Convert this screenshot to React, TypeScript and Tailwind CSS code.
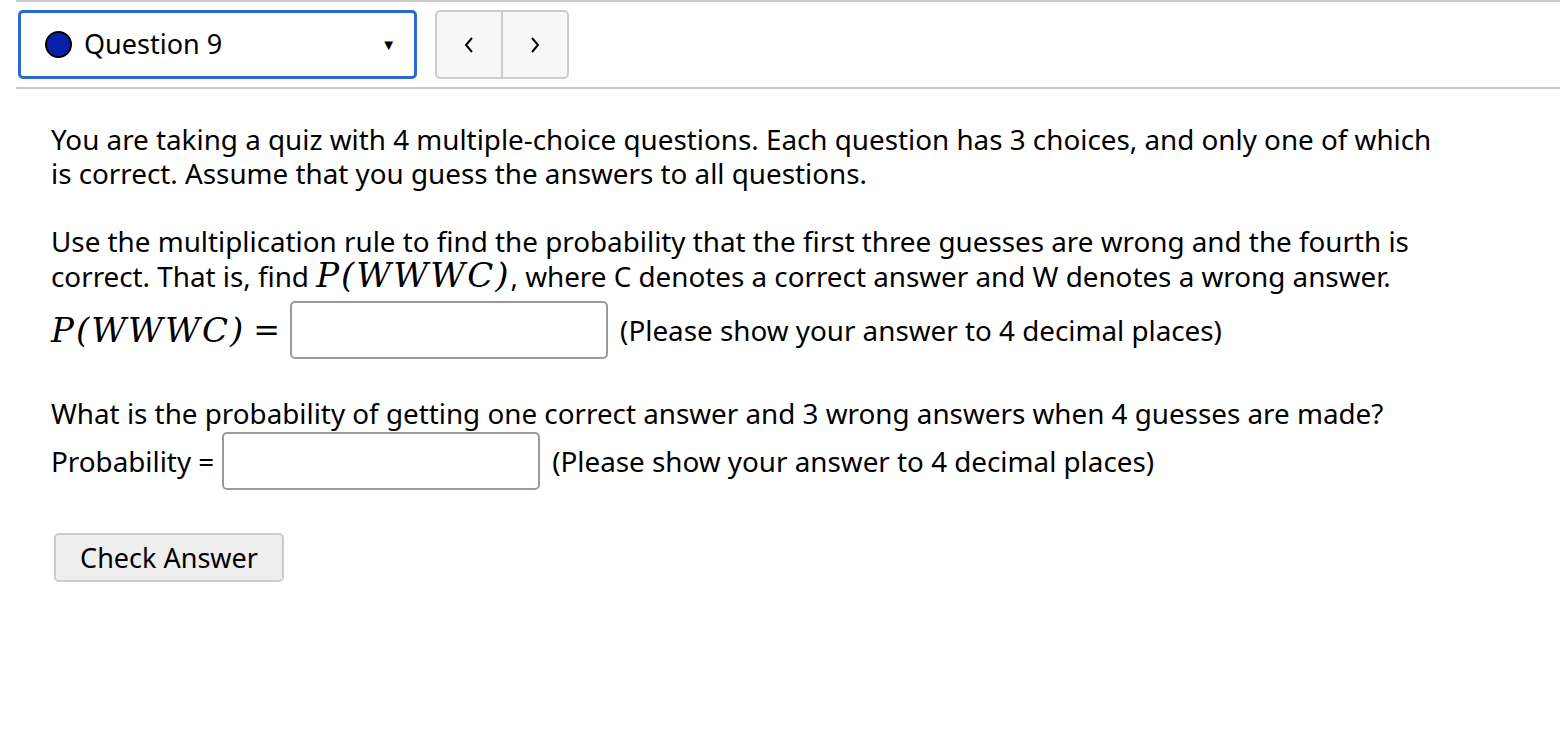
const font = { fontFamily: '"Noto Sans", "Liberation Sans", sans-serif' }
const serif = { fontFamily: '"DejaVu Serif", "Liberation Serif", serif' }

const MathP = () => (
  <span className="italic text-[34px] leading-none tracking-[2px]" style={serif}>P(WWWC)</span>
)

export default function App() {
  return (
    <div className="w-[1560px] h-[732px] bg-white text-black overflow-hidden" style={font}>
      <div className="ml-4 border-t-2 border-[#cccccc]" />
      <div className="flex items-center gap-[18px] pl-[18px] pt-[8px] pb-[8px]">
        <div className="w-[399px] h-[69px] border-[3px] border-[#2a6acf] rounded-[5px] flex items-center pl-[24px] pr-[18px]">
          <span className="w-[27px] h-[27px] rounded-full bg-[#0a1fa8] border-2 border-black mr-[12px]" />
          <span className="text-[27px]">Question 9</span>
          <span className="ml-auto text-[15px]">▼</span>
        </div>
        <div className="flex h-[69px] w-[134px] border-2 border-[#cccccc] rounded-[5px] bg-[#f7f7f7]">
          <button className="flex-1 flex items-center justify-center border-r-2 border-[#cccccc]">
            <svg width="12" height="18" viewBox="0 0 12 18" fill="none" stroke="black" strokeWidth="2"><path d="M9 2 L3 9 L9 16" /></svg>
          </button>
          <button className="flex-1 flex items-center justify-center">
            <svg width="12" height="18" viewBox="0 0 12 18" fill="none" stroke="black" strokeWidth="2"><path d="M3 2 L9 9 L3 16" /></svg>
          </button>
        </div>
      </div>
      <div className="ml-4 border-t-2 border-[#cccccc]" />

      <div className="pl-[51px] w-[1451px] pt-[33px] text-[27.8px] leading-[34px]">
        <p>
          You are taking a quiz with 4 multiple-choice questions. Each question has 3 choices, and only one of which is correct. Assume that you guess the answers to all questions.
        </p>
        <p className="mt-[34px]">
          Use the multiplication rule to find the probability that the first three guesses are wrong and the fourth is correct. That is, find <MathP />, where C denotes a correct answer and W denotes a wrong answer.
        </p>
        <div className="flex items-center mt-[8px] h-[58px]">
          <MathP />
          <span className="text-[32px] ml-[8px] mr-[10px]" style={serif}>=</span>
          <input className="w-[318px] h-[58px] border-2 border-[#9a9a9a] rounded-[5px] outline-none" />
          <span className="ml-[12px]">(Please show your answer to 4 decimal places)</span>
        </div>
        <p className="mt-[37px]">What is the probability of getting one correct answer and 3 wrong answers when 4 guesses are made?</p>
        <div className="flex items-center mt-[2px]">
          <span className="mr-[8px]">Probability =</span>
          <input className="w-[318px] h-[58px] border-2 border-[#9a9a9a] rounded-[5px] outline-none" />
          <span className="ml-[12px]">(Please show your answer to 4 decimal places)</span>
        </div>
        <button className="mt-[43px] ml-[3px] w-[230px] h-[49px] bg-[#eeeeee] border-2 border-[#cccccc] rounded-[5px] text-[27px] leading-none">
          Check Answer
        </button>
      </div>
    </div>
  )
}
